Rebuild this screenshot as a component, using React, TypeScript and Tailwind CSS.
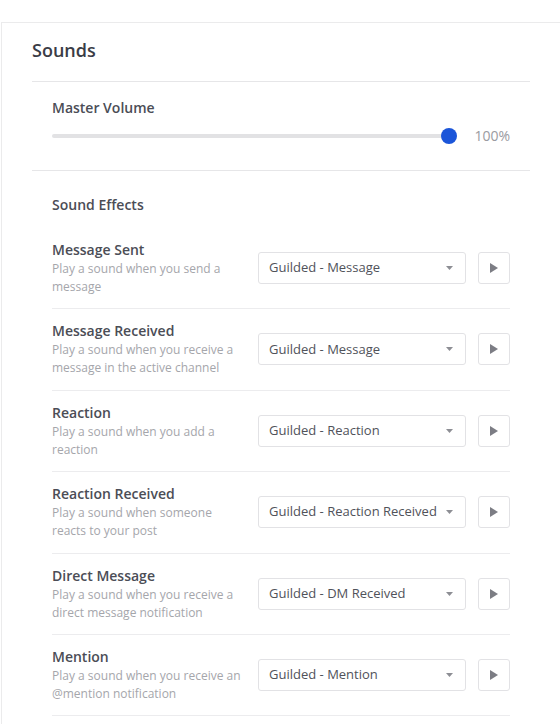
import React from "react";

const rows = [
  { title: "Message Sent", desc: "Play a sound when you send a message", value: "Guilded - Message" },
  { title: "Message Received", desc: "Play a sound when you receive a message in the active channel", value: "Guilded - Message" },
  { title: "Reaction", desc: "Play a sound when you add a reaction", value: "Guilded - Reaction" },
  { title: "Reaction Received", desc: "Play a sound when someone reacts to your post", value: "Guilded - Reaction Received" },
  { title: "Direct Message", desc: "Play a sound when you receive a direct message notification", value: "Guilded - DM Received" },
  { title: "Mention", desc: "Play a sound when you receive an @mention notification", value: "Guilded - Mention" },
];

export default function App() {
  return (
    <div
      className="w-[560px] h-[724px] overflow-hidden bg-white pt-[22px] pl-[1px]"
      style={{ fontFamily: '"Open Sans", "Noto Sans", sans-serif' }}
    >
      <div className="h-full border-t border-l border-[#ebebec] pl-[30px] pr-[30px]">
        <div className="pt-[15px] pb-[19px] border-b border-[#e6e6e8]">
          <h1 className="text-[18px] leading-[24px] font-semibold text-[#3a3c46]">Sounds</h1>
        </div>

        <div className="pl-[20px] pr-[20px] pt-[16px] pb-[26px] border-b border-[#e6e6e8]">
          <div className="text-[14px] leading-[20px] font-semibold text-[#4b4d56]">Master Volume</div>
          <div className="mt-[10px] flex items-center h-[16px]">
            <div className="relative flex-1 h-[16px]">
              <div className="absolute left-0 right-[8px] top-[6px] h-[4px] rounded-full bg-[#e2e2e4]" />
              <div className="absolute right-0 top-0 w-[16px] h-[16px] rounded-full bg-[#1b55d9]" />
            </div>
            <div className="ml-[17px] text-[14px] leading-[20px] text-[#9a9ba1]">100%</div>
          </div>
        </div>

        <div className="pl-[20px] pr-[20px] pt-[24px]">
          <div className="text-[14px] leading-[20px] font-semibold text-[#4b4d56] mb-[13px]">Sound Effects</div>
          {rows.map((r) => (
            <div
              key={r.title}
              className="flex items-center pt-[12px] pb-[12.4px] border-b border-[#ececee]"
            >
              <div className="flex-1 pr-[12px]">
                <div className="text-[14px] leading-[20px] font-semibold text-[#4b4d56]">{r.title}</div>
                <div className="text-[12px] leading-[18px] text-[#a5a6ab]">{r.desc}</div>
              </div>
              <div className="w-[208px] h-[32px] flex items-center justify-between rounded-[3px] border border-[#e2e2e5] bg-white pl-[10px] pr-[12px]">
                <span className="text-[13px] text-[#50525a] whitespace-nowrap">{r.value}</span>
                <svg width="7" height="4" viewBox="0 0 7 4" className="shrink-0">
                  <path d="M0 0 L7 0 L3.5 4 Z" fill="#8d8e94" />
                </svg>
              </div>
              <div className="ml-[12px] w-[32px] h-[32px] flex items-center justify-center rounded-[3px] border border-[#e2e2e5] bg-white">
                <svg width="8" height="10" viewBox="0 0 8 10">
                  <path d="M0 0 L8 5 L0 10 Z" fill="#7c7d84" />
                </svg>
              </div>
            </div>
          ))}
        </div>
      </div>
    </div>
  );
}
